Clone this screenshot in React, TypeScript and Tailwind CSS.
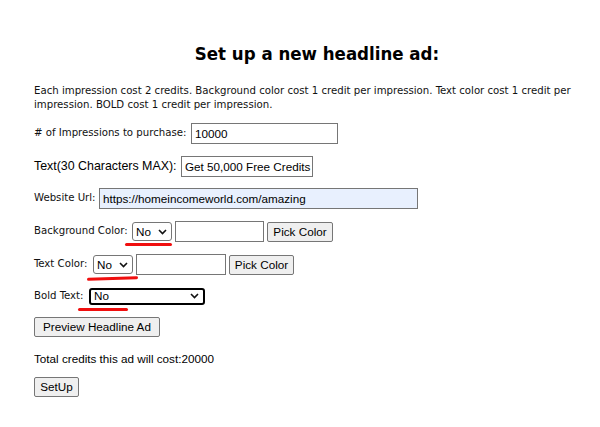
import React from 'react';

const ctrlFont = "font-['Liberation_Sans',Arial,sans-serif] text-[11.7px] text-black";
const labelFont = "font-['DejaVu_Sans_Condensed','DejaVu_Sans',sans-serif] text-[11.3px] text-[#111]";

function Underline({ className }: { className: string }) {
  return <div className={`absolute h-[3px] rounded-full bg-[#f00f0f] ${className}`} />;
}

function Chevron() {
  return (
    <svg width="9" height="6" viewBox="0 0 9 6" className="shrink-0">
      <path d="M1 1l3.5 3.5L8 1" fill="none" stroke="#111" strokeWidth="1.6" />
    </svg>
  );
}

function Select({ width, focused }: { width: string; focused?: boolean }) {
  return (
    <div
      className={`flex shrink-0 items-center justify-between rounded-[3px] bg-white pl-[3px] pr-[4px] ${width} ${
        focused ? 'h-[17px] border-2 border-black' : 'h-[19px] border border-[#767676]'
      }`}
    >
      <span className="leading-none">No</span>
      <Chevron />
    </div>
  );
}

function Btn({ children, width }: { children: React.ReactNode; width: string }) {
  return (
    <button
      className={`flex h-[20px] shrink-0 items-center justify-center rounded-[2px] border border-[#767676] bg-[#efefef] leading-none ${width}`}
    >
      {children}
    </button>
  );
}

function TextBox({ value, width, autofill }: { value?: string; width: string; autofill?: boolean }) {
  return (
    <div
      className={`flex h-[21px] shrink-0 items-center whitespace-nowrap border border-[#767676] px-[3px] ${width} ${
        autofill ? 'bg-[#e8f0fe]' : 'bg-white'
      }`}
    >
      {value}
    </div>
  );
}

function Label({ text, width, font = labelFont }: { text: string; width: string; font?: string }) {
  return <span className={`shrink-0 whitespace-nowrap ${width} ${font}`}>{text}</span>;
}

export default function App() {
  return (
    <div className="min-h-[427px] w-[600px] bg-white pl-[34px] pt-[42px]">
      <h1 className="text-center font-['DejaVu_Sans_Condensed','DejaVu_Sans',sans-serif] text-[18.5px] font-bold leading-[24px] text-black">
        Set up a new headline ad:
      </h1>
      <p className="mt-[18px] w-[545px] font-['DejaVu_Sans_Condensed','DejaVu_Sans',sans-serif] text-[11.3px] leading-[14px] text-[#111]">
        Each impression cost 2 credits. Background color cost 1 credit per impression. Text color cost 1 credit per
        impression. BOLD cost 1 credit per impression.
      </p>

      <div className={`${ctrlFont} mt-[11px] flex flex-col`}>
        <div className="flex h-[21px] items-center">
          <Label text="# of Impressions to purchase:" width="w-[157px]" />
          <TextBox value="10000" width="w-[147px]" />
        </div>

        <div className="mt-[12px] flex h-[21px] items-center">
          <Label
            text="Text(30 Characters MAX):"
            width="w-[147px]"
            font="font-['Liberation_Sans',Arial,sans-serif] text-[12.4px]"
          />
          <TextBox value="Get 50,000 Free Credits" width="w-[132px]" />
        </div>

        <div className="mt-[11px] flex h-[21px] items-center">
          <Label text="Website Url:" width="w-[65px]" />
          <TextBox value="https://homeincomeworld.com/amazing" width="w-[319px]" autofill />
        </div>

        <div className="relative mt-[12px] flex h-[21px] items-center gap-[3px]">
          <Label text="Background Color:" width="w-[95px]" />
          <Select width="w-[40px]" />
          <TextBox width="w-[89px]" />
          <Btn width="w-[66px]">Pick Color</Btn>
          <Underline className="left-[91px] top-[22px] w-[47px]" />
        </div>

        <div className="relative mt-[12px] flex h-[21px] items-center gap-[3px]">
          <Label text="Text Color:" width="w-[56px]" />
          <Select width="w-[40px]" />
          <TextBox width="w-[90px]" />
          <Btn width="w-[65px]">Pick Color</Btn>
          <Underline className="left-[53px] top-[23px] w-[51px] -rotate-2" />
        </div>

        <div className="relative mt-[12px] flex h-[18px] items-center gap-[3px]">
          <Label text="Bold Text:" width="w-[52px]" />
          <Select width="w-[116px]" focused />
          <Underline className="left-[44px] top-[21px] w-[50px]" />
        </div>

        <div className="mt-[12px]">
          <Btn width="w-[126px]">Preview Headline Ad</Btn>
        </div>

        <p className="mt-[14px] leading-[16px]">Total credits this ad will cost:20000</p>

        <div className="mt-[10px]">
          <Btn width="w-[45px]">SetUp</Btn>
        </div>
      </div>
    </div>
  );
}
